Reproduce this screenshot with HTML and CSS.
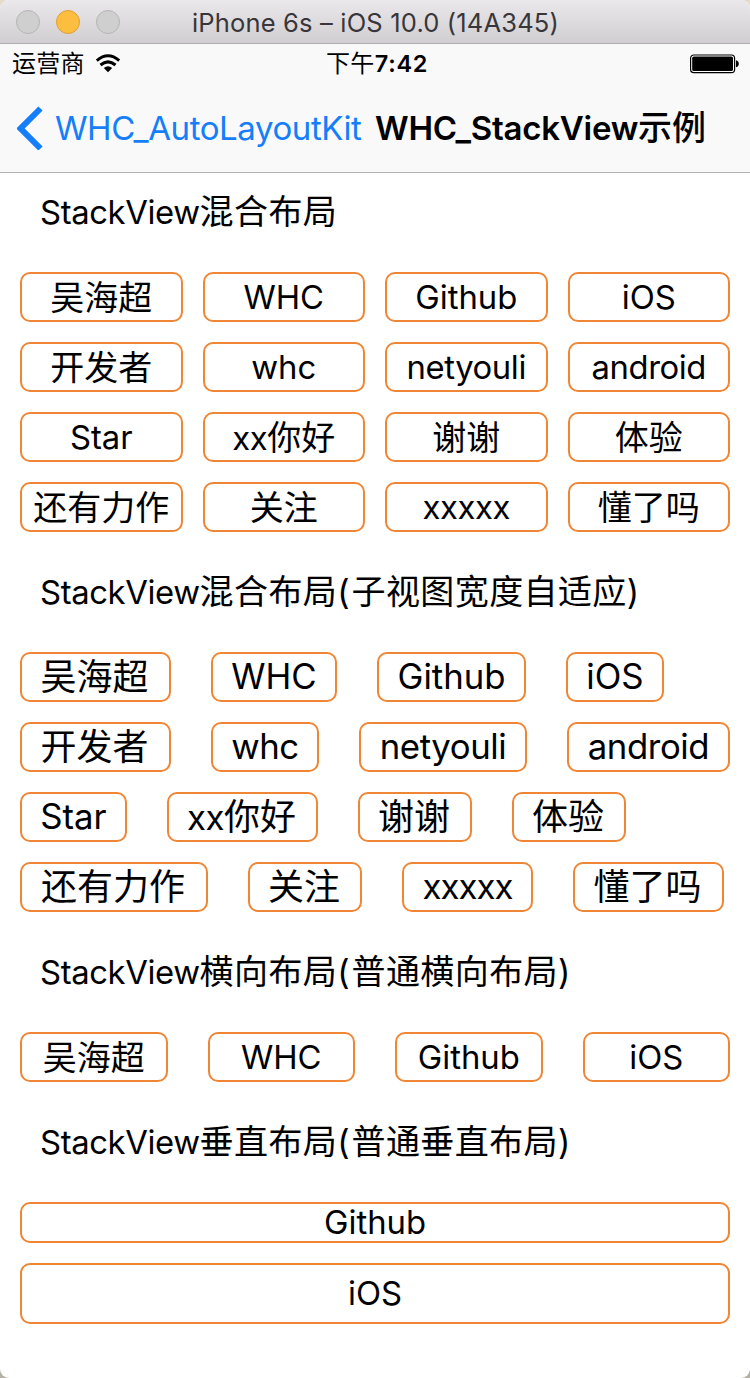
FILE: index.html
```html
<!DOCTYPE html>
<html lang="zh-CN">
<head>
<meta charset="utf-8">
<title>WHC_StackView示例</title>
<link rel="stylesheet" href="styles.css">
</head>
<body>
<div class="window">
  <header class="titlebar">
    <div class="lights"><i class="light"></i><i class="light amber"></i><i class="light"></i></div>
    <span class="window-title">iPhone 6s – iOS 10.0 (14A345)</span>
  </header>
  <div class="navbar">
    <div class="status">
      <div class="carrier"><span>运营商</span>
        <svg class="wifi" width="26" height="20" viewBox="0 0 26 20"><path d="M1.8 6.6Q13-3.2 24.2 6.6" fill="none" stroke="#000" stroke-width="3"/><path d="M5.5 11Q13 4.7 20.5 11" fill="none" stroke="#000" stroke-width="3"/><path d="M8.8 14.1Q13 10.3 17.2 14.1L13 18.3Z"/></svg>
      </div>
      <div class="clock">下午<b>7:42</b></div>
      <svg class="battery" width="50" height="20" viewBox="0 0 50 20"><rect x="0.6" y="1" width="44" height="17.6" rx="3.2" fill="#fff" stroke="#000" stroke-width="1.2"/><rect x="2.2" y="2.6" width="40.8" height="14.4" rx="1.6"/><path d="M46 6.3Q48.8 7 48.8 9.8T46 13.3Z"/></svg>
    </div>
    <nav class="nav">
      <svg class="back" width="26" height="44" viewBox="0 0 26 44"><path d="M23.5 2.5L3.6 22.5L23.5 42.5" fill="none" stroke="#147efb" stroke-width="6"/></svg>
      <span class="back-label">WHC_AutoLayoutKit</span>
      <h1 class="nav-title">WHC_StackView<span class="cjk">示例</span></h1>
    </nav>
  </div>
  <main class="content">
    <h2 class="label"><span class="latin">StackView</span>混合布局</h2>
    <div class="grid">
      <div class="chip">吴海超</div><div class="chip latin">WHC</div><div class="chip latin">Github</div><div class="chip latin">iOS</div>
      <div class="chip">开发者</div><div class="chip latin">whc</div><div class="chip latin tight">netyouli</div><div class="chip latin tight">android</div>
      <div class="chip latin">Star</div><div class="chip"><span class="latin tight">xx</span>你好</div><div class="chip">谢谢</div><div class="chip">体验</div>
      <div class="chip">还有力作</div><div class="chip">关注</div><div class="chip latin tight">xxxxx</div><div class="chip">懂了吗</div>
    </div>
    <h2 class="label"><span class="latin">StackView</span>混合布局<span class="paren">(</span>子视图宽度自适应<span class="paren">)</span></h2>
    <div class="fit">
      <div class="row"><div class="chip" style="width:151px">吴海超</div><div class="chip latin" style="width:126px">WHC</div><div class="chip latin" style="width:149px">Github</div><div class="chip latin" style="width:98px">iOS</div></div>
      <div class="row"><div class="chip" style="width:151px">开发者</div><div class="chip latin tight" style="width:108px">whc</div><div class="chip latin tight" style="width:168px">netyouli</div><div class="chip latin tight" style="width:163px">android</div></div>
      <div class="row"><div class="chip latin" style="width:107px">Star</div><div class="chip" style="width:151px"><span class="latin tight">xx</span>你好</div><div class="chip" style="width:114px">谢谢</div><div class="chip" style="width:114px">体验</div></div>
      <div class="row"><div class="chip" style="width:188px">还有力作</div><div class="chip" style="width:114px">关注</div><div class="chip latin xs" style="width:131px">xxxxx</div><div class="chip" style="width:151px">懂了吗</div></div>
    </div>
    <h2 class="label"><span class="latin">StackView</span>横向布局<span class="paren">(</span>普通横向布局<span class="paren">)</span></h2>
    <div class="grid wide">
      <div class="chip">吴海超</div><div class="chip latin">WHC</div><div class="chip latin">Github</div><div class="chip latin">iOS</div>
    </div>
    <h2 class="label"><span class="latin">StackView</span>垂直布局<span class="paren">(</span>普通垂直布局<span class="paren">)</span></h2>
    <div class="column">
      <div class="chip latin short">Github</div>
      <div class="chip latin tall">iOS</div>
    </div>
  </main>
</div>
</body>
</html>
```
FILE: styles.css
```css
* { box-sizing: border-box; }
body { margin: 0; background: linear-gradient(#e6dccb 50%, #b5b1a6 50%); color: #000; font-family: Inter, "Noto Sans CJK SC", sans-serif; }
.window { height: 1378px; background: #fff; border-radius: 9px; overflow: hidden; }
.titlebar { height: 44px; display: grid; grid-template-columns: 192px 1fr; align-items: center; background: linear-gradient(#ebe8eb, #d1ced1); border-bottom: 1px solid #b0aeb0; }
.lights { display: flex; gap: 16px; padding-left: 16px; }
.light { width: 24px; height: 24px; border-radius: 50%; background: #d0cfd0; border: 1px solid #b6b4b6; }
.amber { background: #fdbd3e; border-color: #dfa034; }
.window-title { font-size: 25.5px; letter-spacing: .17px; color: #38363a; white-space: nowrap; line-height: 42px; padding-top: 2px; }
.navbar { height: 129px; background: #f9f9f9; border-bottom: 1px solid #b2b2b2; }
.status { height: 40px; display: grid; grid-template-columns: 1fr auto 1fr; align-items: center; padding: 0 10px 0 12px; font-size: 24px; }
.carrier { display: flex; align-items: center; gap: 10px; line-height: 40px; }
.carrier span { letter-spacing: .3px; }
.clock { padding-left: 2px; line-height: 40px; font-weight: 400; letter-spacing: .4px; }
.clock b { font-size: 23.5px; font-weight: 600; letter-spacing: .7px; }
.battery { justify-self: end; }
.nav { height: 88px; display: flex; align-items: center; padding-left: 17px; }
.back-label { margin-left: 12px; width: 320px; font-size: 33px; letter-spacing: -.42px; color: #147efb; white-space: nowrap; }
.nav-title { margin: 0; padding-bottom: 5px; font-size: 33px; font-weight: 600; letter-spacing: -.25px; white-space: nowrap; }
.nav-title .cjk { font-size: 34px; font-weight: 500; letter-spacing: 0; }
.content { padding: 19px 20px 0; }
.label { margin: 0; padding-left: 20px; height: 80px; line-height: 40px; font-size: 34px; font-weight: 400; letter-spacing: .4px; white-space: nowrap; }
.label .latin, .chip.latin, .chip .latin { font-size: .965em; letter-spacing: 0; }
.label .latin { letter-spacing: -.38px; }
.paren { padding-right: 1.5px; }
.grid { display: grid; grid-template-columns: repeat(4, 1fr); gap: 20px; margin-bottom: 40px; font-size: 34px; }
.grid.wide { column-gap: 40px; }
.fit { display: flex; flex-direction: column; gap: 20px; margin-bottom: 40px; font-size: 36px; }
.row { display: flex; gap: 40px; }
.chip { height: 50px; display: flex; align-items: center; justify-content: center; border: 2px solid #ee8635; border-radius: 10px; line-height: 46px; white-space: nowrap; flex: none; }
.grid .chip:not(.latin) { padding-top: 2px; }
.fit .chip.latin, .column .chip.latin { padding-bottom: 2px; }
.fit .chip:not(.latin) { padding-right: 2px; }
.chip.tight, .chip .tight { letter-spacing: -.4px; }
.chip.xs { letter-spacing: -1px; }
.column { display: flex; flex-direction: column; gap: 20px; font-size: 34px; }
.column .short { height: 41px; }
.column .tall { height: 61px; }
```
